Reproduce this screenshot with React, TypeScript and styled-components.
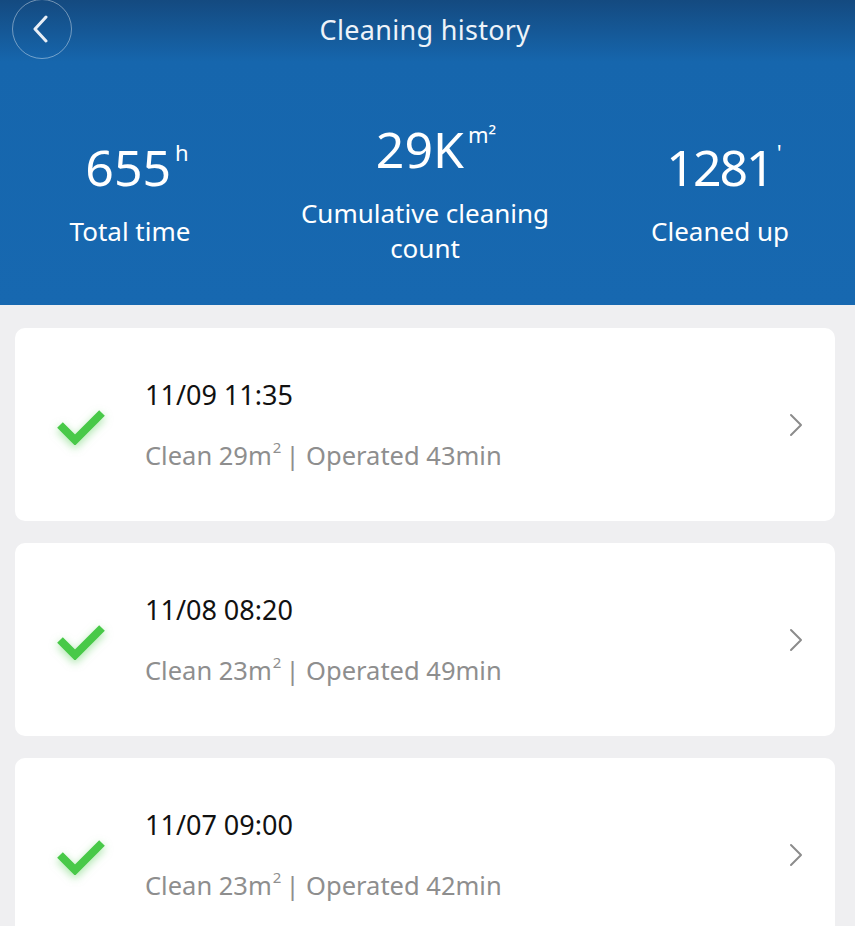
import React from "react";
import styled, { createGlobalStyle } from "styled-components";

const Global = createGlobalStyle`
  html, body { margin: 0; padding: 0; background: #efeff1; }
  body { font-family: "Noto Sans", "Open Sans", sans-serif; }
  * { box-sizing: border-box; }
`;

const Page = styled.div`
  width: 855px;
  min-height: 926px;
  background: #efeff1;
  overflow: hidden;
`;

const Header = styled.header`
  background: linear-gradient(180deg, #144a80 0px, #1666ad 62px, #1768b0 100%);
  color: #fff;
  height: 305px;
  display: flex;
  flex-direction: column;
  overflow: hidden;
`;

const TopBar = styled.div`
  height: 58px;
  display: flex;
  align-items: center;
  justify-content: center;
  position: relative;
`;

const BackButton = styled.button`
  position: absolute;
  left: 12px;
  top: -1px;
  width: 60px;
  height: 60px;
  border-radius: 50%;
  border: 1.5px solid rgba(255, 255, 255, 0.4);
  background: transparent;
  display: flex;
  align-items: center;
  justify-content: center;
  padding: 0;
  cursor: pointer;
`;

const Title = styled.h1`
  margin: 0 5px 0 0;
  font-size: 27px;
  font-weight: 400;
  color: #eef3f9;
  letter-spacing: 0.3px;
`;

const Stats = styled.div`
  flex: 1;
  display: grid;
  grid-template-columns: repeat(3, 295px);
  justify-content: center;
  align-items: center;
  margin-left: -5px;
  padding-top: 22px;
`;

const Stat = styled.div`
  display: flex;
  flex-direction: column;
  align-items: center;
  text-align: center;
`;

const Value = styled.div<{ $shift: number }>`
  font-size: 50px;
  line-height: 60px;
  font-weight: 400;
  display: flex;
  align-items: flex-start;
  margin-left: ${(p) => p.$shift}px;
`;

const Digits = styled.span<{ $squeeze: number }>`
  letter-spacing: ${(p) => p.$squeeze}px;
`;

const Unit = styled.span`
  font-size: 22px;
  line-height: 22px;
  margin-left: 4px;
  margin-top: 4px;
`;

const Label = styled.div`
  font-size: 26px;
  line-height: 35px;
  margin-top: 17px;
  max-width: 270px;
`;

const List = styled.main`
  display: flex;
  flex-direction: column;
  gap: 22px;
  padding: 23px 20px 0 15px;
`;

const Card = styled.div`
  background: #fff;
  border-radius: 10px;
  height: 193px;
  display: flex;
  align-items: center;
  padding: 0 32px 0 39px;
`;

const CheckWrap = styled.div`
  width: 54px;
  height: 40px;
  flex: none;
  display: flex;
  align-items: center;
  justify-content: center;
  filter: drop-shadow(0 3px 4px rgba(76, 201, 76, 0.5));
  margin-right: 37px;
  margin-top: 4px;
`;

const Info = styled.div`
  flex: 1;
  display: flex;
  flex-direction: column;
  gap: 24px;
  margin-top: 0;
`;

const DateText = styled.div`
  font-size: 27px;
  line-height: 36px;
  color: #111;
`;

const Sub = styled.div`
  font-size: 25.5px;
  line-height: 36px;
  color: #8e8e8e;
  sup {
    font-size: 15px;
    vertical-align: 12px;
    line-height: 0;
    margin-left: 1px;
    margin-right: 4px;
  }
`;

const Chevron = styled.svg`
  flex: none;
`;

const stats = [
  { value: "655", unit: "h", label: "Total time", shift: 14, squeeze: 0 },
  { value: "29K", unit: "m²", label: "Cumulative cleaning count", shift: 22, squeeze: 0 },
  { value: "1281", unit: "'", label: "Cleaned up", shift: 8, squeeze: -2 },
];

const records = [
  { date: "11/09 11:35", area: 29, mins: 43 },
  { date: "11/08 08:20", area: 23, mins: 49 },
  { date: "11/07 09:00", area: 23, mins: 42 },
];

export default function App() {
  return (
    <Page>
      <Global />
      <Header>
        <TopBar>
          <BackButton aria-label="back">
            <svg width="20" height="28" viewBox="0 0 20 28">
              <path d="M14 2 L3 14 L14 26" fill="none" stroke="#e8eef6" strokeWidth="3" strokeLinecap="round" strokeLinejoin="round" />
            </svg>
          </BackButton>
          <Title>Cleaning history</Title>
        </TopBar>
        <Stats>
          {stats.map((s) => (
            <Stat key={s.label}>
              <Value $shift={s.shift}>
                <Digits $squeeze={s.squeeze}>{s.value}</Digits>
                <Unit>{s.unit}</Unit>
              </Value>
              <Label>{s.label}</Label>
            </Stat>
          ))}
        </Stats>
      </Header>
      <List>
        {records.map((r) => (
          <Card key={r.date}>
            <CheckWrap>
              <svg width="50" height="36" viewBox="0 0 50 36">
                <path d="M4 16 L19 31 L46 4" fill="none" stroke="#48c948" strokeWidth="8" strokeLinejoin="miter" />
              </svg>
            </CheckWrap>
            <Info>
              <DateText>{r.date}</DateText>
              <Sub>
                Clean {r.area}m<sup>2</sup>| Operated {r.mins}min
              </Sub>
            </Info>
            <Chevron width="14" height="24" viewBox="0 0 14 24">
              <path d="M2 2 L12 12 L2 22" fill="none" stroke="#8c8c8c" strokeWidth="2" strokeLinecap="round" strokeLinejoin="round" />
            </Chevron>
          </Card>
        ))}
      </List>
    </Page>
  );
}
